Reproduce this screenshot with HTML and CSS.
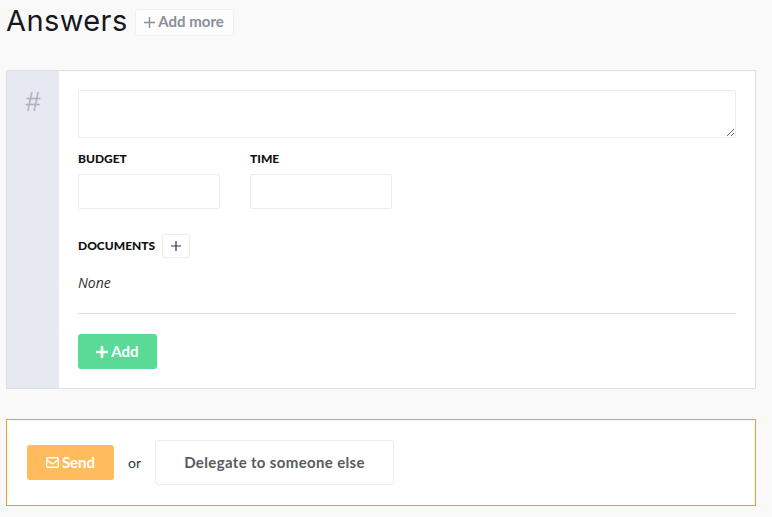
FILE: index.html
```html
<!DOCTYPE html>
<html lang="en">
<head>
<meta charset="utf-8">
<title>Answers</title>
<link rel="stylesheet" href="styles.css">
</head>
<body>
<header class="heading">
  <h1 class="title">Answers</h1>
  <button class="btn-more" type="button">
    <svg width="11" height="11" viewBox="0 0 11 11"><path d="M5.5 0v11M0 5.500h11" stroke="#8a8f99" stroke-width="1.4" fill="none"/></svg>
    <span class="btn-text">Add more</span>
  </button>
</header>
<section class="card">
  <aside class="rail"><span class="hash">#</span></aside>
  <div class="form">
    <textarea class="answer"></textarea>
    <div class="fields">
      <label class="field"><span class="label">BUDGET</span><input class="input" type="text"></label>
      <label class="field"><span class="label">TIME</span><input class="input" type="text"></label>
    </div>
    <div class="docs">
      <span class="label-inline">DOCUMENTS</span>
      <button class="btn-plus" type="button" aria-label="Add document">
        <svg width="10" height="10" viewBox="0 0 10 10"><path d="M5 0v10M0 5h10" stroke="#1f3a5f" stroke-width="1.2" fill="none"/></svg>
      </button>
    </div>
    <p class="none">None</p>
    <hr class="rule">
    <button class="btn-add" type="button">
      <svg width="12" height="12" viewBox="0 0 12 12"><path d="M6 0v12M0 6h12" stroke="#fff" stroke-width="2.6" fill="none"/></svg>
      <span class="btn-text">Add</span>
    </button>
  </div>
</section>
<section class="actions">
  <button class="btn-send" type="button">
    <svg width="13" height="11" viewBox="0 0 13 11"><rect x=".7" y=".7" width="11.600" height="9.600" rx="1.400" fill="none" stroke="#fff" stroke-width="1.4"/><path d="M1 3.200l5.500 3.800L12 3.200" fill="none" stroke="#fff" stroke-width="1.4"/></svg>
    <span class="btn-text">Send</span>
  </button>
  <span class="or">or</span>
  <button class="btn-delegate" type="button"><span class="btn-text">Delegate to someone else</span></button>
</section>
</body>
</html>
```
FILE: styles.css
```css
* { box-sizing: border-box; }
html, body { height: 100%; }
body {
  margin: 0;
  padding: 0 16px 0 6px;
  background: #f9f9f9;
  font-family: "Lato", "Liberation Sans", sans-serif;
  color: #111;
  overflow: hidden;
}
button { font-family: inherit; cursor: pointer; }
.btn-text { display: block; line-height: 18px; margin-top: -2px; }
.heading {
  display: flex;
  align-items: center;
  gap: 7px;
  height: 44px;
  margin-bottom: 26px;
}
.title {
  margin: 0 0 2px;
  font-family: "Inter", sans-serif;
  font-size: 29px;
  font-weight: 400;
  line-height: 42px;
  color: #16181d;
  letter-spacing: 0.4px;
}
.btn-more {
  height: 27px;
  width: 99px;
  padding: 0;
  display: flex;
  align-items: center;
  justify-content: center;
  gap: 3px;
  background: #fdfdfd;
  border: 1px solid #f0f0f0;
  border-radius: 3px;
  font-size: 15px;
  font-weight: 700;
  color: #8a8f99;
  white-space: nowrap;
}
.card {
  display: flex;
  height: 319px;
  background: #fff;
  border: 1px solid #e0e0e0;
}
.rail {
  flex: 0 0 52px;
  background: #e6e9f2;
  text-align: center;
  padding-top: 15px;
}
.hash {
  font-size: 27px;
  line-height: 32px;
  color: #aeb2ba;
  font-family: "Liberation Sans", sans-serif;
}
.form {
  flex: 1;
  padding: 19px 19px 0 19px;
  display: flex;
  flex-direction: column;
  align-items: flex-start;
}
.answer {
  display: block;
  width: 100%;
  height: 48px;
  border: 1px solid #ececec;
  border-radius: 2px;
  background: #fff;
  outline: none;
  margin: 0;
}
.fields {
  display: flex;
  gap: 30px;
  margin-top: 14px;
}
.field { display: flex; flex-direction: column; width: 142px; }
.label, .label-inline {
  font-size: 12px;
  font-weight: 900;
  color: #111;
  line-height: 14px;
}
.input {
  margin-top: 8px;
  height: 35px;
  width: 142px;
  border: 1px solid #ececec;
  border-radius: 2px;
  background: #fff;
  outline: none;
}
.docs {
  display: flex;
  align-items: center;
  gap: 7px;
  margin-top: 25px;
}
.btn-plus {
  width: 28px;
  height: 24px;
  padding: 0;
  display: flex;
  align-items: center;
  justify-content: center;
  background: #fff;
  border: 1px solid #ececec;
  border-radius: 3px;
}
.none {
  margin: 16px 0 0;
  font-family: "Open Sans", sans-serif;
  font-style: italic;
  font-size: 14px;
  line-height: 18px;
  color: #333;
}
.rule {
  width: 100%;
  margin: 21px 0 0;
  border: 0;
  border-top: 1px solid #e0e0e0;
}
.btn-add {
  margin-top: 20px;
  width: 79px;
  height: 35px;
  padding: 0;
  display: flex;
  align-items: center;
  justify-content: center;
  gap: 3px;
  background: #5ada97;
  border: 0;
  border-radius: 3px;
  color: #fff;
  font-size: 15px;
  font-weight: 700;
}
.actions {
  display: flex;
  align-items: center;
  height: 87px;
  margin-top: 30px;
  padding-left: 20px;
  background: #fff;
  border: 1px solid #f59e1d;
}
.btn-send {
  width: 87px;
  height: 35px;
  padding: 0;
  display: flex;
  align-items: center;
  justify-content: center;
  gap: 3px;
  background: #ffbb5c;
  border: 0;
  border-radius: 3px;
  color: #fff;
  font-size: 15px;
  font-weight: 700;
}
.or {
  margin: 0 14px;
  font-size: 14px;
  color: #2c3442;
}
.btn-delegate {
  width: 239px;
  height: 45px;
  padding: 0;
  background: #fff;
  border: 1px solid #ececec;
  border-radius: 3px;
  font-size: 15px;
  font-weight: 700;
  letter-spacing: 0.35px;
  color: #5a5a60;
}
```
